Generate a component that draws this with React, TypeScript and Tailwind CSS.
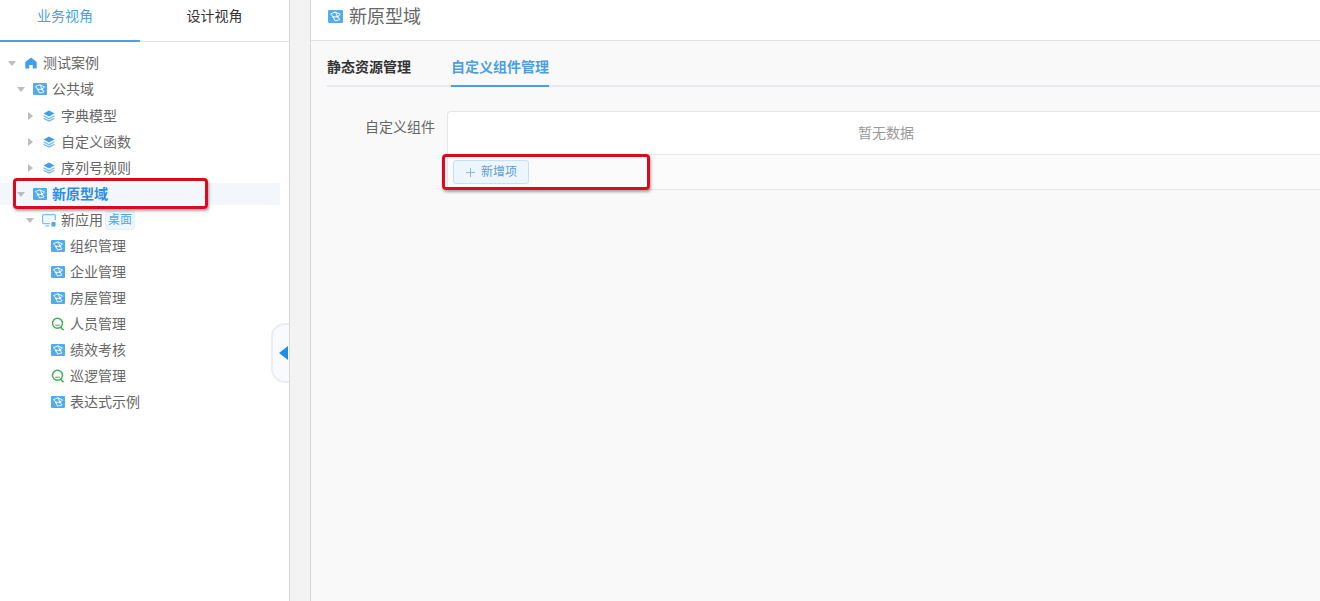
import React from "react";

const FONT = "font-['Liberation_Sans','Noto_Sans_CJK_SC',sans-serif]";

function Domain({ className = "" }: { className?: string }) {
  return (
    <svg width="14" height="12" viewBox="0 0 14 12" className={`shrink-0 ${className}`}>
      <rect x="0" y="0" width="14" height="12" rx="1" fill="#53abef" />
      <path d="M2.5 3.5 L7 1.8 L11.5 4 L9 6.2 L11 9 L6.5 10 L5 6.5 L2.5 3.5 M5 6.5 L9 6.2 M7 1.8 L9 6.2" fill="none" stroke="#fff" strokeWidth="0.9" />
      <circle cx="5" cy="6.5" r="1" fill="#fff" />
      <circle cx="9" cy="6.2" r="1" fill="#fff" />
    </svg>
  );
}
function Home() {
  return (
    <svg width="12" height="12" viewBox="0 0 12 12" className="ml-[1px] shrink-0">
      <path d="M6 0.5 L11.7 5 V11.5 H7.8 V8 H4.2 V11.5 H0.3 V5 Z" fill="#3f9fec" />
    </svg>
  );
}
function Layers() {
  return (
    <svg width="12" height="12" viewBox="0 0 12 12" className="ml-[1px] shrink-0">
      <path d="M6 0.5 L11.5 3.5 L6 6.5 L0.5 3.5 Z" fill="#3f9fec" />
      <path d="M0.6 5.2 L6 8 L11.4 5.2 L11.5 6.6 L6 9.4 L0.5 6.6 Z" fill="#70b9f2" />
      <path d="M0.6 7.8 L6 10.2 L11.4 7.8 L11.5 9 L6 11.7 L0.5 9 Z" fill="#70b9f2" />
    </svg>
  );
}
function Search() {
  return (
    <svg width="14" height="14" viewBox="0 0 14 14" className="shrink-0">
      <circle cx="6.5" cy="6.2" r="5" fill="none" stroke="#45ad55" strokeWidth="1.5" />
      <path d="M9.3 10 L12.6 13.2" stroke="#45ad55" strokeWidth="1.6" />
      <path d="M4.2 8.2 H8.8" stroke="#45ad55" strokeWidth="1" />
    </svg>
  );
}
function Screen() {
  return (
    <svg width="14" height="13" viewBox="0 0 14 13" className="shrink-0">
      <path d="M8 9.6 H1.6 A1 1 0 0 1 0.6 8.6 V1.6 A1 1 0 0 1 1.6 0.6 H12.4 A1 1 0 0 1 13.4 1.6 V6" fill="#f1f8fe" stroke="#7cc0f3" strokeWidth="1.2" />
      <path d="M3.5 12 H7" stroke="#7cc0f3" strokeWidth="1.2" />
      <rect x="9.5" y="8" width="4" height="4.5" rx="0.5" fill="#4ba6ee" />
    </svg>
  );
}
function Caret({ open }: { open: boolean }) {
  return open ? (
    <svg width="8" height="5" viewBox="0 0 8 5" className="shrink-0">
      <path d="M0 0 H8 L4 5 Z" fill="#bdbdbd" />
    </svg>
  ) : (
    <svg width="5" height="8" viewBox="0 0 5 8" className="shrink-0">
      <path d="M0 0 V8 L5 4 Z" fill="#bdbdbd" />
    </svg>
  );
}

function Row({
  caret,
  icon,
  label,
  pad,
  tag,
  active,
  extra = "",
}: {
  caret?: "open" | "closed";
  icon: React.ReactNode;
  label: string;
  pad: string;
  tag?: boolean;
  active?: boolean;
  extra?: string;
}) {
  return (
    <div className={`h-[26px] py-[2px] ${extra}`}>
      <div className={`flex h-[22px] items-center ${pad} ${active ? "bg-[#f3f6fa]" : ""}`}>
        <span className={`flex w-[19px] shrink-0 ${caret === "closed" ? "pl-[5px]" : "pl-[3px]"}`}>
          {caret && <Caret open={caret === "open"} />}
        </span>
        <span className="flex w-[19px] shrink-0 items-center">{icon}</span>
        <span className={`text-[14px] leading-[22px] whitespace-nowrap ${active ? "font-bold text-[#2a8ee6]" : "text-[#666]"}`}>
          {label}
        </span>
        {tag && (
          <span className="ml-[2px] flex h-[19px] items-center rounded-[3px] border border-[#e3f1fc] bg-[#eff7fe] px-[2px] text-[12px] text-[#4ba6ee]">
            桌面
          </span>
        )}
      </div>
    </div>
  );
}

export default function App() {
  return (
    <div className={`relative flex h-[601px] w-[1320px] overflow-hidden bg-[#f9f9f9] ${FONT}`}>
      <aside className="flex w-[290px] shrink-0 flex-col border-r border-[#d8d8d8] bg-white">
        <div className="flex h-[42px] border-b border-[#e3e3e3]">
          <div className="-mb-px flex w-[140px] justify-center border-b-2 border-[#4d9fe0] pt-[6px] pr-[10px] text-[14px] leading-[20px] text-[#4d9fe0]">
            业务视角
          </div>
          <div className="flex w-[149px] justify-center pt-[6px] text-[14px] leading-[20px] text-[#333]">
            设计视角
          </div>
        </div>
        <div className="w-[280px] pt-[8px]">
          <Row pad="pl-[5px]" caret="open" icon={<Home />} label="测试案例" />
          <Row pad="pl-[14px]" caret="open" icon={<Domain />} label="公共域" />
          <Row pad="pl-[23px]" caret="closed" icon={<Layers />} label="字典模型" extra="mt-[1px]" />
          <Row pad="pl-[23px]" caret="closed" icon={<Layers />} label="自定义函数" />
          <Row pad="pl-[23px]" caret="closed" icon={<Layers />} label="序列号规则" />
          <Row pad="pl-[14px]" caret="open" icon={<Domain />} label="新原型域" active />
          <Row pad="pl-[23px]" caret="open" icon={<Screen />} label="新应用" tag />
          <Row pad="pl-[32px]" icon={<Domain />} label="组织管理" />
          <Row pad="pl-[32px]" icon={<Domain />} label="企业管理" />
          <Row pad="pl-[32px]" icon={<Domain />} label="房屋管理" />
          <Row pad="pl-[32px]" icon={<Search />} label="人员管理" />
          <Row pad="pl-[32px]" icon={<Domain />} label="绩效考核" />
          <Row pad="pl-[32px]" icon={<Search />} label="巡逻管理" />
          <Row pad="pl-[32px]" icon={<Domain />} label="表达式示例" />
        </div>
      </aside>

      <div className="w-[20px] shrink-0 bg-[#f3f3f3]" />

      <main className="flex min-w-0 flex-1 flex-col border-l border-[#d8d8d8] bg-[#f9f9f9]">
        <header className="flex h-[41px] items-start gap-[6px] border-b border-[#e3e3e3] bg-white pl-[17px] pt-[5px]">
          <Domain className="mt-[5px] h-[13px] w-[15px]" />
          <span className="text-[18px] leading-[24px] text-[#666]">新原型域</span>
        </header>
        <div className="ml-[16px] flex h-[46px] gap-[40px] border-b-2 border-[#e8e8f0]">
          <div className="-mb-[2px] pt-[16px] text-[14px] leading-[20px] font-bold text-[#333]">静态资源管理</div>
          <div className="-mb-[2px] border-b-2 border-[#4d9fe0] pt-[16px] text-[14px] leading-[20px] font-bold text-[#4d9fe0]">
            自定义组件管理
          </div>
        </div>
        <div className="mt-[24px] flex">
          <div className="w-[136px] shrink-0 pt-[6px] pr-[12px] text-right text-[14px] leading-[20px] text-[#666]">
            自定义组件
          </div>
          <div className="flex-1">
            <div className="flex h-[44px] items-center justify-center rounded-tl-[4px] border-t border-b border-l border-[#e6e6e6] bg-white pl-[4px] text-[14px] text-[#999]">
              暂无数据
            </div>
            <div className="flex h-[35px] items-center border-b border-l border-[#e6e6e6] bg-[#fbfbfb] pl-[5px]">
              <div className="flex h-[24px] w-[76px] items-center justify-center gap-[5px] rounded-[3px] border border-[#c5dff5] bg-[#eef6fd] text-[12px] text-[#5a9fd8]">
                <svg width="11" height="11" viewBox="0 0 11 11">
                  <path d="M5.5 1 V10 M1 5.5 H10" stroke="#8ab8de" strokeWidth="1" />
                </svg>
                新增项
              </div>
            </div>
          </div>
        </div>
      </main>

      {/* collapse handle */}
      <div className="absolute top-[323px] left-[271px] flex h-[60px] w-[18px] items-center justify-end rounded-l-[14px] border-y-2 border-l-2 border-[#e9eef5] bg-[#f8fafd] pr-[1px]">
        <svg width="9" height="14" viewBox="0 0 9 14">
          <path d="M9 0 V14 L0 7 Z" fill="#1f8ceb" />
        </svg>
      </div>

      {/* annotation boxes */}
      <div className="absolute top-[178px] left-[13px] h-[31px] w-[195px] rounded-[4px] border-[3px] border-[#dc0a1e] shadow-[1px_2px_3px_rgba(0,0,0,0.35)]" />
      <div className="absolute top-[154px] left-[442px] h-[36px] w-[208px] rounded-[4px] border-[3px] border-[#dc0a1e] shadow-[1px_2px_3px_rgba(0,0,0,0.35)]" />
    </div>
  );
}
